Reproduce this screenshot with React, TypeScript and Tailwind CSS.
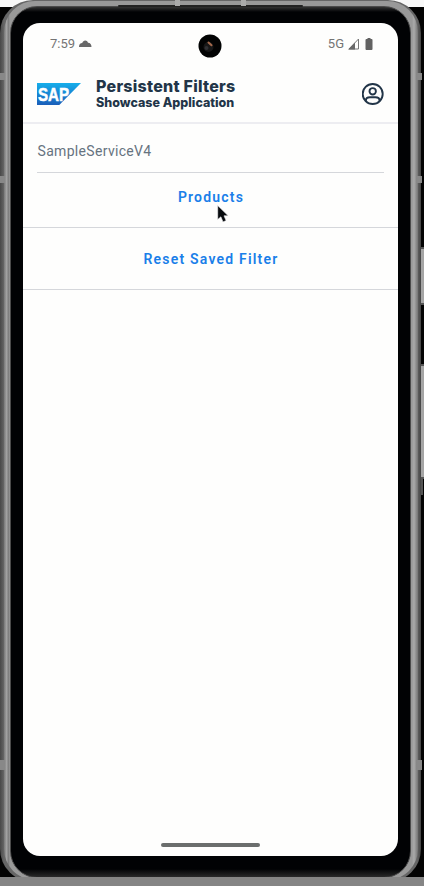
import React from "react";

function StatusBar() {
  return (
    <div className="flex h-[42px] shrink-0 items-center justify-between pl-[27px] pr-[25px] text-[#747474]">
      <div className="flex items-center gap-[4px]">
        <span className="font-['Roboto','Noto_Sans',sans-serif] text-[13px] leading-4">7:59</span>
        <svg width="13" height="9" viewBox="0 0 13 9" className="-mt-px">
          <path d="M0 7.7C0 5 2 4 3.2 4.1 4.2.9 8 .7 9 3.8c2.2-.1 3.5 1.8 3.5 4.2H0Z" fill="#686868" />
        </svg>
      </div>
      <div className="flex items-center">
        <span className="font-['Roboto','Noto_Sans',sans-serif] text-[13px] leading-4">5G</span>
        <svg width="12" height="12" viewBox="0 0 12 12" className="ml-[4px]">
          <path d="M1 11 10.5 1v10Z" fill="none" stroke="#777" />
          <path d="M0 11.5 7 4.5v7Z" fill="#686868" />
        </svg>
        <svg width="8" height="12" viewBox="0 0 8 12" className="ml-[5px]">
          <path d="M2.5 0h3v1h1q1 0 1 1v9q0 1-1 1h-5q-1 0-1-1V2q0-1 1-1h1Z" fill="#626262" />
        </svg>
      </div>
    </div>
  );
}

function SapLogo() {
  return (
    <svg width="45" height="22" viewBox="0 0 45 22" className="mt-px shrink-0">
      <defs>
        <linearGradient id="logoBlue" x1="0" y1="0" x2="0" y2="1">
          <stop offset="0" stopColor="#16aeea" />
          <stop offset="0.5" stopColor="#1686d4" />
          <stop offset="1" stopColor="#1b5fb9" />
        </linearGradient>
      </defs>
      <path d="M0 0h44L22.3 22H0Z" fill="url(#logoBlue)" />
      <text
        x="1"
        y="17.5"
        textLength="31"
        lengthAdjust="spacingAndGlyphs"
        fill="#fff"
        stroke="#fff"
        strokeWidth="0.5"
        className="font-['Liberation_Sans',sans-serif] text-[18px] font-bold"
      >
        SAP
      </text>
    </svg>
  );
}

function Header() {
  return (
    <header className="flex h-[59px] shrink-0 items-center border-b-2 border-[#ededf1] pl-[14px] pr-[14px] text-[#223548]">
      <SapLogo />
      <div className="ml-[14px] flex flex-col font-['Inter','Noto_Sans',sans-serif] font-extrabold">
        <span className="whitespace-nowrap text-[16px] leading-[17px] tracking-[0.25px]">Persistent Filters</span>
        <span className="whitespace-nowrap text-[12.5px] leading-[15px]">Showcase Application</span>
      </div>
      <svg width="22" height="22" viewBox="0 0 22 22" fill="none" stroke="#223548" strokeWidth="1.9" className="ml-auto">
        <circle cx="10.7" cy="11" r="10" />
        <circle cx="10.7" cy="8.3" r="3.2" />
        <path d="M3.9 18.2v-1c0-2 2-3 4.1-3h5.4c2.1 0 4.1 1 4.1 3v1" />
      </svg>
    </header>
  );
}

function Screen() {
  return (
    <main className="relative flex h-[833px] w-[375px] flex-col overflow-hidden rounded-[17px] bg-[#fefefd]">
      <StatusBar />
      <Header />
      <div className="mx-[14px] flex h-[49px] shrink-0 items-center border-b border-[#d5d7db] pt-[6px] font-['Roboto','Noto_Sans',sans-serif] text-[14px] tracking-[0.32px] text-[#667380]">
        <span className="pl-[0.5px]">SampleServiceV4</span>
      </div>
      <button className="flex h-[55px] shrink-0 items-center justify-center border-b border-[#d5d7db] pb-[5px] pl-px font-['Roboto','Noto_Sans',sans-serif] text-[14px] font-semibold tracking-[1.2px] text-[#1a7fe9]">
        Products
      </button>
      <button className="flex h-[62px] shrink-0 items-center justify-center border-b border-[#d5d7db] pl-px pt-[2px] font-['Roboto','Noto_Sans',sans-serif] text-[14px] font-semibold tracking-[1.2px] text-[#1a7fe9]">
        Reset Saved Filter
      </button>
      <div className="mx-auto mb-[9px] mt-auto h-[4px] w-[99px] rounded-full bg-[#6b6e6d]" />
      <svg width="24" height="24" viewBox="0 0 24 24" className="absolute left-[175px] top-[11px]">
        <circle cx="12" cy="12" r="11.5" fill="#020303" />
        <circle cx="10.5" cy="13" r="5" fill="#171717" />
        <path d="m10.5 8.5 3 2.8" stroke="#a3694c" strokeWidth="2" strokeLinecap="round" />
        <circle cx="8.5" cy="14" r="2" fill="#303033" />
      </svg>
      <svg width="13" height="18" viewBox="0 0 13 18" className="absolute left-[194px] top-[182px]">
        <path d="M.7.5v14l3.2-2.7 2.1 5.1 3.1-1.3-2.1-4.8h4.2Z" fill="#080b0e" stroke="#f0f0f4" strokeWidth=".6" />
      </svg>
    </main>
  );
}

export default function App() {
  return (
    <div className="relative flex h-[886px] w-[424px] flex-col overflow-hidden bg-[linear-gradient(#f8f8f8_7px,#030303_7px)]">
      <div className="h-[877px] shrink-0 overflow-hidden">
        <div className="h-[882px] w-[421px] rounded-[33px] bg-[linear-gradient(90deg,#484848,#666_4px,#666_417px,#444_421px)] pl-[4px] pt-px">
          <div className="h-[879px] w-[414px] rounded-[31px] bg-[linear-gradient(90deg,#777,#aaa_3px,#777_4px,#999_6px,#999_408px,#aaa_410px,#737373_414px)] pl-[6px] pt-[5px]">
            <div className="h-[872px] w-[401px] rounded-[27px] border border-[#4b4b4b] bg-[linear-gradient(#333,#010204_5px,#010204_862px,#333_872px)] pl-[12px] pt-[16px]">
              <Screen />
            </div>
          </div>
        </div>
      </div>
      <div className="h-[9px] shrink-0 bg-[#858585]" />
      <div className="absolute left-[118px] top-[5px] h-[2px] w-[185px] rounded-full bg-[#222]" />
      <div className="absolute left-[175px] top-0 h-[6px] w-[5px] bg-[#aaa]" />
      <div className="absolute left-[241px] top-0 h-[6px] w-[5px] bg-[#aaa]" />
      <div className="absolute left-0 top-[73px] h-[7px] w-[5px] bg-[#888]" />
      <div className="absolute left-0 top-[176px] h-[7px] w-[5px] bg-[#888]" />
      <div className="absolute left-0 top-[760px] h-[10px] w-[5px] bg-[#888]" />
      <div className="absolute left-[417px] top-[73px] h-[7px] w-[5px] bg-[#888]" />
      <div className="absolute left-[417px] top-[176px] h-[7px] w-[5px] bg-[#888]" />
      <div className="absolute left-[417px] top-[760px] h-[10px] w-[5px] bg-[#888]" />
      <div className="absolute left-[421px] top-[247px] h-[58px] w-[3px] border-y-2 border-[#555] bg-[#a5a5a5]" />
      <div className="absolute left-[421px] top-[364px] h-[115px] w-[3px] border-y-2 border-[#555] bg-[#a5a5a5]" />
      <div className="absolute left-[421px] top-[479px] h-[16px] w-[2px] bg-[#555]" />
    </div>
  );
}
